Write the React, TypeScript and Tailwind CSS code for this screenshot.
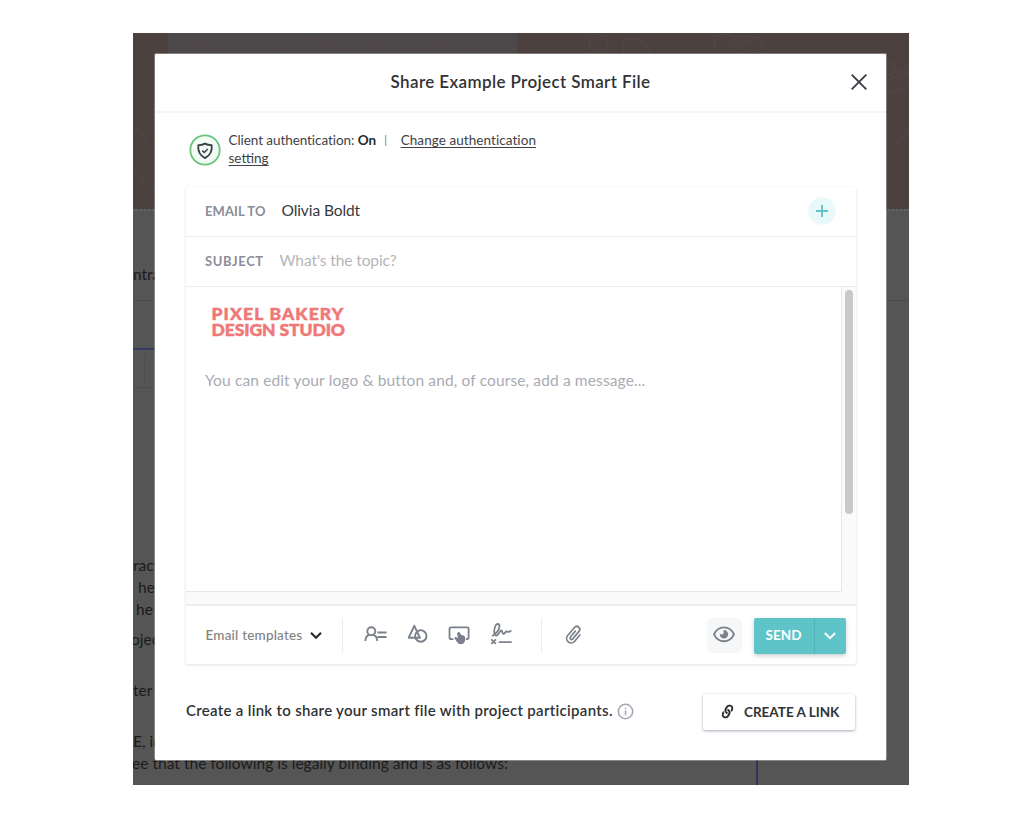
import type { ReactNode } from "react";
import { FaLink } from "react-icons/fa";

function Banner() {
  return (
    <div className="flex h-[176px] w-full bg-[#4d4140]">
      <svg width="776" height="176" viewBox="0 0 776 176" fill="none" stroke="#574847" strokeWidth="1">
        <rect x="35" width="349" height="176" fill="#4d484a" stroke="none" />
        <path d="M51 20 68 9l24 11M140 20 176 3l44 17M225 20h10V0M241 0v20M246 0v20M248 13l25-13M265 20l38-20M290 20l38-20M325 20l38-20M371 0v20M374 12l10-5M374 20l10-5" />
        <path d="M170 9l3-3M184 6l3 2M192 12l3-2M200 8l3 2M208 14l3-3M178 14l3-2" strokeWidth="2" />
        <path stroke="#53484a" d="M457 14c-5-12 8-18 16-8s-9 18-16 8zM491 20c-4-12 6-18 14-14s12 8 12 14M583 18c-4-8 0-17 8-17 5 0 9 2 10 6 4-5 18-5 26 0 5 5 0 11-4 13M589 9c6 0 12 3 16 7M603 12c6-4 14-5 20-2" />
        <path stroke="#53484a" d="M754 30c10-4 10 7 3 13M756 42l20-7M756 46l20-7M756 60l20-6M754 113c10-3 17-8 22-15M0 140c10 0 14 12 5 18M10 168c1-12 10-15 12-10M0 95l8 2 6 12" />
      </svg>
    </div>
  );
}

function Line({ className, children }: { className: string; children: ReactNode }) {
  return <p className={`h-[22px] whitespace-pre text-[15.5px] leading-[22px] text-[#1b1b1b] ${className}`}>{children}</p>;
}

function DocumentPage() {
  return (
    <div className="flex h-full flex-col">
      <Banner />
      <div className="h-[2px] border-t-2 border-dotted border-[#5e6070]" />
      <div className="h-[90px] border-b border-[#4c4c4c] pt-[52px]">
        <Line className="">ntract</Line>
      </div>
      <div className="flex w-[625px] grow flex-col border-r-2 border-[#2f3358]">
        <div className="h-[49px] border-b-2 border-[#363b66]" />
        <div className="h-[38px] border-b border-[#4d4d4d] py-[5px]">
          <div className="h-full w-3 border-r border-[#4d4d4d]" />
        </div>
        <Line className="mt-[166px]">ract</Line>
        <Line className="pl-[5px]">hereby</Line>
        <Line className="pl-[3px]">he</Line>
        <Line className="-ml-[2px] mt-2">oject</Line>
        <Line className="mt-[29px]">ter a</Line>
        <Line className="mt-[29px]">E, in</Line>
        <Line className="-ml-[1px] tracking-[0.030px]">ee that the following is legally binding and is as follows:</Line>
      </div>
    </div>
  );
}

function ShieldBadge() {
  return (
    <svg className="mt-[2.500px] shrink-0" width="32" height="32" viewBox="0 0 32 32" fill="none">
      <circle cx="16" cy="16" r="14.7" fill="#f2fbf4" stroke="#69c47c" strokeWidth="1.8" />
      <path d="M16 9.6c2 1.1 4.2 1.6 6.7 1.5.6 6.3-1.7 10.500-6.700 13-5-2.500-7.300-6.700-6.700-13 2.500.1 4.700-.4 6.700-1.500z" stroke="#3a3f48" strokeWidth="1.8" strokeLinejoin="round" />
      <path d="m13.300 16.600 2 1.900 3.500-3.600" stroke="#3a3f48" strokeWidth="1.500" />
    </svg>
  );
}

function Toolbar() {
  return (
    <div className="flex h-[58px] items-center pl-[20px] pr-[10px]">
      <span className="w-[104.500px] text-[13.5px] font-medium tracking-[0.2px] text-[#828282]">Email templates</span>
      <svg className="mt-[1px]" width="12" height="9" viewBox="0 0 12 9" fill="none" stroke="#2a2d33" strokeWidth="2.200">
        <path d="m1 1.700 5 5 5-5" />
      </svg>
      <div className="ml-5 h-[35px] w-px bg-[#ececf0]" />
      <svg className="ml-[21px]" width="23" height="24" viewBox="0 0 23 24" fill="none" stroke="#7b818b" strokeWidth="1.900">
        <circle cx="7.300" cy="8.200" r="4" />
        <path d="M1.300 18c.2-3.400 2.100-5.700 4-6.200M13.300 18c-.2-3.400-2.200-5.700-4.100-6.200M13.500 9.500H22.500M13.500 14H22.500" />
      </svg>
      <svg className="ml-[20px]" width="22" height="24" viewBox="0 0 22 24" fill="none" stroke="#7b818b" strokeWidth="1.900">
        <path d="M7.300 2.800 1.700 14.700h11.200z" strokeLinejoin="round" />
        <circle cx="13.800" cy="13" r="5.700" />
      </svg>
      <svg className="ml-[19px]" width="22" height="24" viewBox="0 0 22 24" fill="none" stroke="#7b818b" strokeWidth="1.800">
        <path d="M5.500 16.200H3.200c-1 0-1.700-.7-1.700-1.600V5.800c0-.9.7-1.500 1.700-1.500h15.700c1 0 1.700.6 1.700 1.500v8.800c0 .9-.7 1.600-1.700 1.600h-1" />
        <path fill="#7b818b" stroke="none" d="M10.400 9.200c.9-.3 1.600.2 1.900 1l.6 1.500 2.600.9c1.300.6 1.800 1.500 1.800 2.800 0 2-.4 3.200-1.500 4.500-1.300 1.400-4.100 1.700-5.700.3-1.400-1.300-2.900-3.700-3.500-4.900-.5-1 .6-1.700 1.400-1.200l1.900 1.100-.8-4.600c-.1-.7.400-1.200 1.300-1.400z" />
      </svg>
      <svg className="ml-[20px]" width="23" height="26" viewBox="0 0 23 26" fill="none" stroke="#7b818b" strokeWidth="1.800" strokeLinecap="round">
        <path d="M2.800 13.800c3.700-2.200 7.200-7.300 6.600-10.500-.5-2-2.900-1.700-4 .7-1.600 3.300-1.700 8.700.5 9.500 2.700.7 3.500-4.700 5.400-5 1.600-.2.500 3.300 2.200 3.300 1.500 0 1.800-2.300 3.200-2.300 1.300 0 1.500 1.300 4-.5" />
        <path d="m1.800 17.800 3.600 3.600M5.400 17.800l-3.600 3.600M9.500 20.200h11.500" />
      </svg>
      <div className="ml-[28px] h-[35px] w-px bg-[#ececf0]" />
      <svg className="ml-[21px]" width="22" height="22" viewBox="0 0 22 22" fill="none" stroke="#7b818b" strokeWidth="1.700" strokeLinecap="round">
        <path transform="rotate(40 11 11) translate(1 1.200)" d="M14.500 6v8.200a4.500 4.500 0 0 1-9 0V3.800a3 3 0 0 1 6 0v9.800a1.500 1.500 0 0 1-3 0V6" />
      </svg>
      <button className="ml-auto flex size-[35px] items-start justify-center rounded-[6px] bg-[#f5f7f8] pt-2">
        <svg width="22" height="17" viewBox="0 0 22 17" fill="none" stroke="#7b818b" strokeWidth="1.900">
          <path d="M1 8.300C5.300-1 16.700-1 21 8.300 16.700 17.500 5.300 17.500 1 8.300z" />
          <path fill="#7b818b" stroke="none" d="M11 4.100a4.200 4.200 0 1 1-4.100 3.300c.6.900 1.700 1.300 2.700.8 1.200-.5 1.600-2 .8-3.100-.1-.400.100-.900.600-1z" />
        </svg>
      </button>
      <div className="ml-[12px] mt-[1px] flex h-9 overflow-hidden rounded-[2px] text-white shadow-[0_2px_4px_rgba(50,70,90,0.25)]">
        <button className="w-[60px] bg-[#5ec4c8] text-[13.5px] font-bold">SEND</button>
        <button className="flex w-[32px] items-center justify-center border-l border-[#54b2b7] bg-[#5ec4c8]">
          <svg className="mt-[1px]" width="12" height="8" viewBox="0 0 12 8" fill="none" stroke="#fff" strokeWidth="1.800">
            <path d="m.8 1 5.200 5.200L11.200 1" />
          </svg>
        </button>
      </div>
    </div>
  );
}

function Composer() {
  return (
    <div className="ml-[30.500px] flex h-[477px] w-[670px] flex-col rounded-[3px] bg-white shadow-[0_1px_2px_1px_rgba(60,60,110,0.090)]">
      <div className="flex h-[50px] items-center border-b border-[#ebebeb] pl-[19.500px] pr-5">
        <span className="w-[76.500px] text-[13px] font-bold tracking-[0.100px] text-[#8b8e98]">EMAIL TO</span>
        <span className="-mt-[2px] text-[15.500px] tracking-[-0.090px] text-[#37393d]">Olivia Boldt</span>
        <svg className="-mt-px ml-auto" width="28" height="28" viewBox="0 0 28 28">
          <circle cx="14" cy="14" r="13.800" fill="#e9f8f8" />
          <path d="M8 14h12M14 8v12" stroke="#5ec4c8" strokeWidth="1.900" />
        </svg>
      </div>
      <div className="flex h-[50px] items-center border-b border-[#ebebeb] pl-[19.500px]">
        <span className="w-[74.500px] text-[13px] font-bold tracking-[0.600px] text-[#8b8e98]">SUBJECT</span>
        <span className="-mt-[2px] text-[15.500px] tracking-[-0.100px] text-[#b5b5b8]">What's the topic?</span>
      </div>
      <div className="flex h-[319px] border-b-2 border-[#eeeeee] bg-[#fafafa]">
        <div className="h-[305px] w-[656px] border-b border-r border-[#e8e8e8] bg-white pl-[19.500px]">
          <div className="mt-[19px] pl-[6.500px] text-[17.500px] font-black leading-[16px] text-[#f07878] [-webkit-text-stroke:0.500px_#f07878]">
            <p className="tracking-[1.150px]">PIXEL BAKERY</p>
            <p className="tracking-[-0.100px]">DESIGN STUDIO</p>
          </div>
          <p className="mt-[32px] text-[15.500px] leading-[20px] tracking-[0.130px] text-[#a9abb3]">
            You can edit your logo &amp; button and, of course, add a message...
          </p>
        </div>
        <div className="ml-[3px] mt-[3px] h-[224px] w-2 rounded-full bg-[#c9c9c9]" />
      </div>
      <Toolbar />
    </div>
  );
}

function ShareDialog() {
  return (
    <div className="absolute left-[22px] top-[21px] flex h-[706px] w-[731px] flex-col rounded-[1px] bg-white shadow-[0_0_0_1px_rgba(255,255,255,0.300)]">
      <div className="flex h-[59px] items-center border-b-2 border-[#f5f5f5] pb-[2px]">
        <h1 className="grow pl-[35px] text-center text-[17px] font-semibold tracking-[0.380px] text-[#303236]">
          Share Example Project Smart File
        </h1>
        <svg className="mr-[19px]" width="16" height="16" viewBox="0 0 16 16" stroke="#3a3f48" strokeWidth="1.900">
          <path d="m.7.7 14.600 14.600M15.300.7.7 15.300" />
        </svg>
      </div>
      <div className="flex h-[74px] pl-[34px] pt-[18px]">
        <ShieldBadge />
        <div className="ml-[7.500px] text-[13.500px] leading-[18px] text-[#404246]">
          <div className="flex">
            <span className="tracking-[-0.070px]">Client authentication:</span>
            <b className="ml-[3.500px] text-[#26282c]">On</b>
            <span className="ml-[8px] w-[16.500px] text-[11px] text-[#777]">|</span>
            <a className="tracking-[0.070px] underline underline-offset-2">Change authentication</a>
          </div>
          <a className="underline underline-offset-2">setting</a>
        </div>
      </div>
      <Composer />
      <div className="mt-[30px] flex h-9 items-center pl-[31px] pr-[31px]">
        <p className="-mt-[4px] text-[15px] font-semibold tracking-[0.300px] text-[#303236]">
          Create a link to share your smart file with project participants.
        </p>
        <svg className="ml-1 -mt-[1px]" width="17" height="17" viewBox="0 0 17 17" fill="none" stroke="#a3a6b1" strokeWidth="1.500">
          <circle cx="8.500" cy="8.500" r="7.200" />
          <path d="M8.500 7.500v4.700M8.500 4.700v1.500" />
        </svg>
        <button className="ml-auto flex h-9 w-[152px] items-center rounded-[2px] bg-white pl-[18px] text-[13.500px] font-bold text-[#303236] shadow-[0_1px_3px_rgba(40,40,90,0.400)]">
          <FaLink className="-mt-[2px] size-[13px] -rotate-[12deg]" />
          <span className="ml-[10px] whitespace-nowrap">CREATE A LINK</span>
        </button>
      </div>
    </div>
  );
}

export default function App() {
  return (
    <div className="h-[822px] w-[1026px] bg-white pl-[133px] pt-[33px] font-['Lato','Open_Sans',sans-serif]">
      <div className="relative h-[752px] w-[776px] overflow-hidden bg-[#555555]">
        <DocumentPage />
        <ShareDialog />
      </div>
    </div>
  );
}
